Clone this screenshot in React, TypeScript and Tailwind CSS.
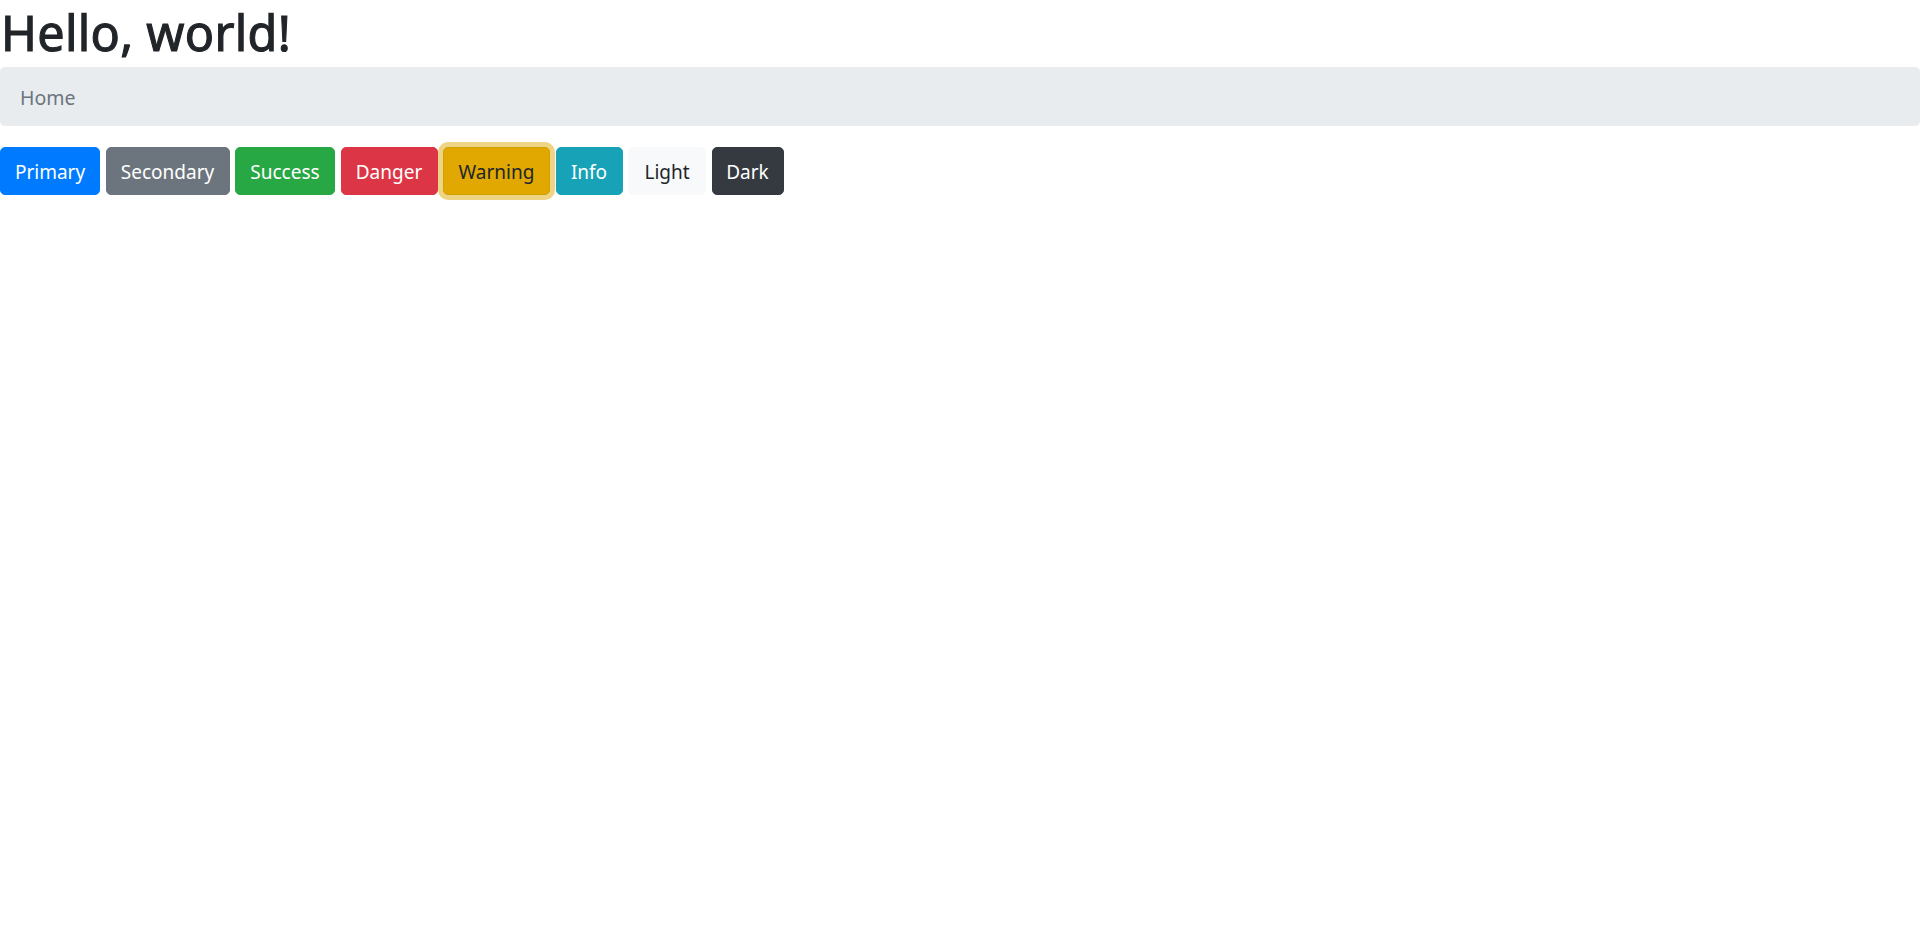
import React from "react";

const buttons = [
  { label: "Primary", w: "w-[100px]", cls: "bg-[#007bff] border-[#007bff] text-white" },
  { label: "Secondary", w: "w-[124px]", cls: "bg-[#6c757d] border-[#6c757d] text-white" },
  { label: "Success", w: "w-[100px]", cls: "bg-[#28a745] border-[#28a745] text-white" },
  { label: "Danger", w: "w-[97px]", cls: "bg-[#dc3545] border-[#dc3545] text-white" },
  { label: "Warning", w: "w-[107px]", cls: "bg-[#e0a800] border-[#d39e00] text-[#212529] shadow-[0_0_0_5px_rgba(222,170,12,0.5)]" },
  { label: "Info", w: "w-[67px]", cls: "bg-[#17a2b8] border-[#17a2b8] text-white" },
  { label: "Light", w: "w-[78px]", cls: "bg-[#f8f9fa] border-[#f8f9fa] text-[#212529]" },
  { label: "Dark", w: "w-[72px]", cls: "bg-[#343a40] border-[#343a40] text-white" },
];

export default function App() {
  return (
    <div className="min-h-[933px] bg-white text-[#212529] font-['Noto_Sans',sans-serif]">
      <h1 className="h-[60px] text-[48.5px] font-normal leading-[64px] mb-[7px] pl-[1px] tracking-[0.3px] [-webkit-text-stroke:1.1px_#212529]">Hello, world!</h1>
      <nav className="h-[59px] flex items-center px-[20px] pt-[3px] rounded-[5px] bg-[#e9ecef] text-[#6c757d] text-[19.5px] mb-[21px]">
        Home
      </nav>
      <div className="flex gap-[5.5px]">
        {buttons.map((b) => (
          <button
            key={b.label}
            className={`${b.w} h-[48px] flex items-center justify-center pt-[3px] rounded-[5px] border text-[19px] ${b.cls}`}
          >
            {b.label}
          </button>
        ))}
      </div>
    </div>
  );
}
